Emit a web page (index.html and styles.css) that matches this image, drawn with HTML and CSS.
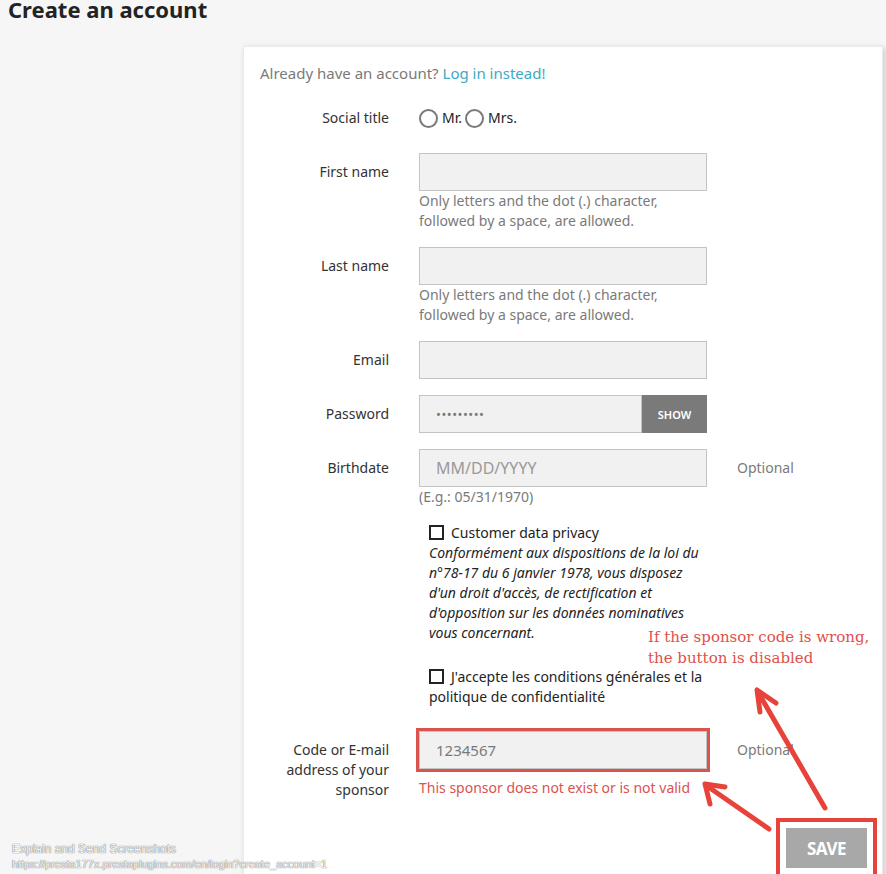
FILE: index.html
```html
<!DOCTYPE html>
<html lang="en">
<head>
    <meta charset="UTF-8">
    <meta name="viewport" content="width=device-width, initial-scale=1.0">
    <title>Create an account</title>
    <link rel="stylesheet" href="styles.css">
</head>
<body>

    <h1 class="page-title">Create an account</h1>

    <section class="card">
        <p class="login-hint">Already have an account? <a href="#">Log in instead!</a></p>

        <form class="register-form">
            <!-- Civilité -->
            <div class="form-row">
                <label class="form-label">Social title</label>
                <div class="form-field radios">
                    <span class="radio"></span><span class="radio-text">Mr.</span>
                    <span class="radio"></span><span class="radio-text">Mrs.</span>
                </div>
            </div>

            <div class="form-row">
                <label class="form-label" for="firstname">First name</label>
                <div class="form-field">
                    <input type="text" id="firstname" class="form-input">
                    <p class="form-hint">Only letters and the dot (.) character, followed by a space, are allowed.</p>
                </div>
            </div>

            <div class="form-row">
                <label class="form-label" for="lastname">Last name</label>
                <div class="form-field">
                    <input type="text" id="lastname" class="form-input">
                    <p class="form-hint">Only letters and the dot (.) character, followed by a space, are allowed.</p>
                </div>
            </div>

            <div class="form-row">
                <label class="form-label" for="email">Email</label>
                <div class="form-field">
                    <input type="email" id="email" class="form-input">
                </div>
            </div>

            <div class="form-row">
                <label class="form-label" for="password">Password</label>
                <div class="form-field input-group">
                    <input type="text" id="password" class="form-input password" value="•••••••••" readonly>
                    <button type="button" class="show-btn">SHOW</button>
                </div>
            </div>

            <div class="form-row">
                <label class="form-label" for="birthday">Birthdate</label>
                <div class="form-field">
                    <input type="text" id="birthday" class="form-input big" placeholder="MM/DD/YYYY">
                    <p class="form-hint">(E.g.: 05/31/1970)</p>
                </div>
                <span class="form-comment">Optional</span>
            </div>

            <div class="form-row check-row">
                <span class="form-label"></span>
                <div class="form-field check-block">
                    <div class="check-line"><span class="checkbox"></span>Customer data privacy</div>
                    <em class="check-note">Conformément aux dispositions de la loi du n°78-17 du 6 janvier 1978, vous disposez d'un droit d'accès, de rectification et d'opposition sur les données nominatives vous concernant.</em>
                </div>
            </div>

            <div class="form-row check-row">
                <span class="form-label"></span>
                <div class="form-field check-block">
                    <div class="check-line"><span class="checkbox"></span>J'accepte les conditions générales et la politique de confidentialité</div>
                </div>
            </div>

            <div class="form-row">
                <label class="form-label" for="sponsor">Code or E-mail address of your sponsor</label>
                <div class="form-field">
                    <input type="text" id="sponsor" class="form-input sponsor" value="1234567">
                    <p class="form-error">This sponsor does not exist or is not valid</p>
                </div>
                <span class="form-comment">Optional</span>
            </div>
        </form>

        <footer class="card-footer">
            <button type="button" class="save-btn">SAVE</button>
        </footer>
    </section>

    <!-- Annotations par-dessus la capture -->
    <p class="note">If the sponsor code is wrong,<br>the button is disabled</p>
    <svg class="arrows" width="886" height="874" viewBox="0 0 886 874">
        <g stroke="#e8433b" stroke-width="5" fill="none" stroke-linecap="round" stroke-linejoin="round">
            <line x1="825" y1="808" x2="758" y2="692"/>
            <polyline points="776,703 757,690 760,712"/>
            <line x1="769" y1="829" x2="707" y2="786"/>
            <polyline points="710,804 705,784 725,787"/>
        </g>
    </svg>

    <div class="watermark">
        <div class="wm-title">Explain and Send Screenshots</div>
        <div>https://presta177x.prestaplugins.com/en/login?create_account=1</div>
    </div>

</body>
</html>
```

FILE: styles.css
```css
body {
    margin: 0;
    background: #f6f6f6;
    font-family: "Noto Sans", sans-serif;
    color: #232323;
    font-size: 14px;
    line-height: 20px;
    height: 874px;
    overflow: hidden;
    position: relative;
}
.page-title {
    margin: -2px 0 0 8px;
    font-size: 22px;
    line-height: 22px;
    font-weight: 700;
    color: #232323;
}
.card {
    margin: 26px 0 0 243px;
    width: 607px;
    height: 820px;
    padding: 16px 15px 0 16px;
    background: #fff;
    border: 1px solid #ebebeb;
    box-shadow: 2px 2px 6px rgba(0, 0, 0, 0.18);
}
.login-hint {
    margin: 0 0 16px;
    font-size: 15px;
    color: #7a7a7a;
}
.login-hint a {
    color: #3fa9c2;
    text-decoration: none;
}
.form-row {
    display: grid;
    grid-template-columns: 129px 288px auto;
    column-gap: 30px;
    margin-bottom: 16px;
}
.form-label {
    text-align: right;
    padding-top: 9px;
    color: #333;
}
.form-input {
    display: block;
    box-sizing: border-box;
    width: 288px;
    height: 38px;
    margin: 0;
    padding: 0 16px;
    background: #f1f1f1;
    border: 1px solid #c4c4c4;
    font-family: "Noto Sans", sans-serif;
    font-size: 15px;
    color: #7a7a7a;
    outline: none;
}
.form-input.big {
    font-size: 16px;
}
.form-input::placeholder {
    color: #9a9a9a;
}
.form-hint {
    margin: 0;
    color: #7a7a7a;
}
.form-error {
    margin: 9px 0 0;
    color: #d9534f;
}
.form-comment {
    padding-top: 9px;
    color: #7a7a7a;
}
.radios {
    display: flex;
    align-items: center;
    height: 38px;
}
.radio {
    width: 15px;
    height: 15px;
    border: 2px solid #7a7a7a;
    border-radius: 50%;
    margin-right: 4px;
}
.radio-text {
    margin-right: 3px;
}
.input-group {
    display: flex;
}
.form-input.password {
    width: 223px;
    font-size: 13px;
    letter-spacing: 0.5px;
}
.show-btn {
    width: 65px;
    height: 38px;
    border: none;
    background: #7a7a7a;
    color: #fff;
    font-family: "Noto Sans", sans-serif;
    font-size: 11px;
    font-weight: 600;
    padding: 0;
}
.check-row {
    margin-bottom: 24px;
}
.check-block {
    margin-left: 10px;
    width: 278px;
}
.checkbox {
    display: inline-block;
    box-sizing: border-box;
    width: 15px;
    height: 15px;
    border: 2px solid #232323;
    margin-right: 7px;
    vertical-align: -2px;
}
.check-note {
    display: block;
}
.form-input.sponsor {
    outline: 3px solid #d9534f;
}
.card-footer {
    text-align: right;
    padding-top: 12px;
}
.save-btn {
    width: 81px;
    height: 40px;
    border: none;
    background: #a8a8a8;
    color: #fff;
    font-family: "Noto Sans", sans-serif;
    font-size: 17px;
    font-weight: 700;
    letter-spacing: -0.5px;
    outline: 4px solid #e8433b;
    outline-offset: 6px;
}
.note {
    position: absolute;
    left: 648px;
    top: 627px;
    margin: 0;
    font-family: "DejaVu Serif", serif;
    font-size: 15px;
    line-height: 21px;
    color: #e0504c;
}
.arrows {
    position: absolute;
    left: 0;
    top: 0;
    pointer-events: none;
}
.watermark {
    position: absolute;
    left: 12px;
    top: 842px;
    font-family: "Liberation Sans", sans-serif;
    font-size: 11px;
    line-height: 15px;
    color: #f4f4f4;
    text-shadow: 0 0 1px #777, 0 0 1px #777;
}
.wm-title {
    font-size: 12px;
}
```
